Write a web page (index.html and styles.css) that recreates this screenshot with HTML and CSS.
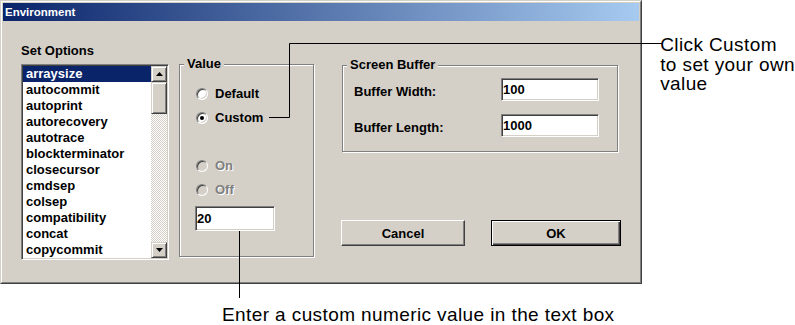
FILE: index.html
```html
<!DOCTYPE html>
<html lang="en">
<head>
  <meta charset="UTF-8">
  <title>Environment</title>
  <link rel="stylesheet" href="styles.css">
</head>
<body>
  <div class="page">
    <div class="top">
      <div class="dialog">
        <div class="dialog-frame">
          <div class="titlebar">Environment</div>
          <div class="dialog-body">
            <div class="options">
              <div class="options-label">Set Options</div>
              <div class="listbox">
                <ul class="list">
                  <li class="selected">arraysize</li>
                  <li>autocommit</li>
                  <li>autoprint</li>
                  <li>autorecovery</li>
                  <li>autotrace</li>
                  <li>blockterminator</li>
                  <li>closecursor</li>
                  <li>cmdsep</li>
                  <li>colsep</li>
                  <li>compatibility</li>
                  <li>concat</li>
                  <li>copycommit</li>
                </ul>
                <div class="scrollbar">
                  <div class="scroll-btn">
                    <svg width="7" height="4" viewBox="0 0 7 4"><polygon points="3.5,0 7,4 0,4" fill="#000"/></svg>
                  </div>
                  <div class="scroll-thumb"></div>
                  <div class="scroll-track"></div>
                  <div class="scroll-btn">
                    <svg width="7" height="4" viewBox="0 0 7 4"><polygon points="0,0 7,0 3.5,4" fill="#000"/></svg>
                  </div>
                </div>
              </div>
            </div>

            <fieldset class="group value-group">
              <legend>Value</legend>
              <div class="radio-row"><span class="radio"></span>Default</div>
              <div class="radio-row"><span class="radio checked"></span>Custom</div>
              <div class="toggle">
                <div class="radio-row disabled"><span class="radio"></span>On</div>
                <div class="radio-row disabled"><span class="radio"></span>Off</div>
              </div>
              <input class="field value-field" type="text" value="20">
            </fieldset>

            <div class="right-col">
              <fieldset class="group buffer-group">
                <legend>Screen Buffer</legend>
                <div class="buffer-row">
                  <span class="buffer-label">Buffer Width:</span>
                  <input class="field buffer-field" type="text" value="100">
                </div>
                <div class="buffer-row">
                  <span class="buffer-label">Buffer Length:</span>
                  <input class="field buffer-field" type="text" value="1000">
                </div>
              </fieldset>
              <div class="buttons">
                <button type="button" class="btn">Cancel</button>
                <button type="button" class="btn btn-default">OK</button>
              </div>
            </div>
          </div>
        </div>
      </div>
      <p class="note note-right">Click Custom<br>to set your own<br>value</p>
    </div>
    <p class="note note-bottom">Enter a custom numeric value in the text box</p>

    <svg class="leaders" width="795" height="325" viewBox="0 0 795 325">
      <path d="M269 117.5H289.5V43.5H662" fill="none" stroke="#000"/>
      <path d="M239.5 231V298" fill="none" stroke="#000"/>
    </svg>
  </div>
</body>
</html>
```

FILE: styles.css
```css
/* Strona */
body {
  margin: 0;
  background: #fff;
  font-family: "Liberation Sans", Arial, sans-serif;
}
.page {
  position: relative;
  width: 795px;
  height: 325px;
  overflow: hidden;
}
.top {
  display: flex;
  align-items: flex-start;
}

/* Okno dialogowe */
.dialog {
  width: 645px;
  height: 284px;
  box-sizing: border-box;
  background: #d4d0c8;
  border: 1px solid;
  border-color: #d4d0c8 #404040 #404040 #d4d0c8;
}
.dialog-frame {
  height: 100%;
  box-sizing: border-box;
  border: 1px solid;
  border-color: #fff #808080 #808080 #fff;
  padding: 1px;
}
.titlebar {
  height: 18px;
  line-height: 18px;
  padding-left: 2px;
  color: #fff;
  font-weight: bold;
  font-size: 11.5px;
  background: linear-gradient(to right, #0a246a, #a6caf0);
}
.dialog-body {
  display: flex;
  align-items: flex-start;
  padding-left: 18px;
  font-size: 13px;
  font-weight: bold;
  line-height: 16px;
}

/* Lista opcji */
.options {
  margin-top: 22px;
}
.options-label {
  margin-bottom: 5px;
}
.listbox {
  display: flex;
  width: 148px;
  height: 196px;
  box-sizing: border-box;
  background: #fff;
  border: 1px solid;
  border-color: #808080 #fff #fff #808080;
  box-shadow: inset 1px 1px 0 #404040, inset -1px -1px 0 #d4d0c8;
  padding: 1px;
}
.list {
  list-style: none;
  margin: 0;
  padding: 0;
  width: 128px;
}
.list li {
  height: 16px;
  padding-left: 3px;
  white-space: nowrap;
}
.list li.selected {
  background: #0a246a;
  color: #fff;
}
.scrollbar {
  width: 16px;
  display: flex;
  flex-direction: column;
}
.scroll-btn,
.scroll-thumb {
  box-sizing: border-box;
  background: #d4d0c8;
  border: 1px solid;
  border-color: #d4d0c8 #404040 #404040 #d4d0c8;
  box-shadow: inset 1px 1px 0 #fff, inset -1px -1px 0 #808080;
}
.scroll-btn {
  height: 16px;
  display: flex;
  align-items: center;
  justify-content: center;
}
.scroll-btn svg {
  display: block;
}
.scroll-thumb {
  height: 32px;
}
.scroll-track {
  flex: 1;
  background: repeating-conic-gradient(#d4d0c8 0 25%, #fff 0 50%) 0 0 / 2px 2px;
}

/* Ramki grup */
.group {
  margin: 0;
  box-sizing: border-box;
  min-width: 0;
  border: 1px solid #808080;
  box-shadow: 1px 1px 0 #fff, inset 1px 1px 0 #fff;
}
.group legend {
  padding: 0 3px;
  background: #d4d0c8;
  line-height: 16px;
}
.value-group {
  margin-left: 10px;
  margin-top: 35px;
  width: 135px;
  height: 201px;
  padding: 14px 0 0 16px;
}
.value-group legend {
  margin-left: -12px;
}
.radio-row {
  display: flex;
  align-items: center;
  gap: 7px;
  height: 16px;
}
.radio-row + .radio-row {
  margin-top: 8px;
}
.toggle {
  margin-top: 32px;
}
.radio {
  position: relative;
  width: 12px;
  height: 12px;
  box-sizing: border-box;
  border-radius: 50%;
  background: #fff;
  border: 1px solid;
  border-color: #808080 #fff #fff #808080;
  box-shadow: inset 1px 1px 0 #404040, inset -1px -1px 0 #d4d0c8;
}
.radio.checked::after {
  content: "";
  position: absolute;
  left: 3px;
  top: 3px;
  width: 4px;
  height: 4px;
  border-radius: 50%;
  background: #000;
}
.radio-row.disabled {
  color: #808080;
  text-shadow: 1px 1px 0 #fff;
}
.radio-row.disabled .radio {
  background: #d4d0c8;
}

/* Pola tekstowe */
.field {
  box-sizing: border-box;
  background: #fff;
  border: 1px solid;
  border-color: #808080 #fff #fff #808080;
  box-shadow: inset 1px 1px 0 #404040, inset -1px -1px 0 #d4d0c8;
  padding: 0 1px;
  font: bold 13px "Liberation Sans", Arial, sans-serif;
  color: #000;
  outline: none;
}
.value-field {
  display: block;
  margin: 8px 0 0 -1px;
  width: 80px;
  height: 25px;
}
.right-col {
  margin-left: 27px;
  margin-top: 36px;
}
.buffer-group {
  margin-left: 1px;
  width: 276px;
  height: 95px;
  padding: 5px 0 0 11px;
}
.buffer-group legend {
  margin-left: -7px;
}
.buffer-row {
  display: grid;
  grid-template-columns: 147px 98px;
  align-items: end;
}
.buffer-row + .buffer-row {
  margin-top: 13px;
}
.buffer-label {
  margin-bottom: 1px;
}
.buffer-field {
  height: 23px;
}

/* Przyciski */
.buttons {
  display: flex;
  gap: 26px;
  margin-top: 68px;
}
.btn {
  width: 124px;
  height: 26px;
  padding: 0;
  background: #d4d0c8;
  color: #000;
  font: bold 13px "Liberation Sans", Arial, sans-serif;
  border: 1px solid;
  border-color: #fff #404040 #404040 #fff;
  box-shadow: inset -1px -1px 0 #808080;
}
.btn-default {
  width: 130px;
  border: 1px solid #000;
  box-shadow: inset 1px 1px 0 #fff, inset -1px -1px 0 #404040, inset -2px -2px 0 #808080;
}

/* Opisy */
.note {
  margin: 0;
  font-size: 19px;
  letter-spacing: 0.4px;
  line-height: 19.5px;
  white-space: nowrap;
  color: #000;
}
.note-right {
  margin: 35px 0 0 18px;
}
.note-bottom {
  margin-top: 20px;
  padding-left: 222px;
  line-height: 21px;
}
.leaders {
  position: absolute;
  left: 0;
  top: 0;
  pointer-events: none;
}
```
